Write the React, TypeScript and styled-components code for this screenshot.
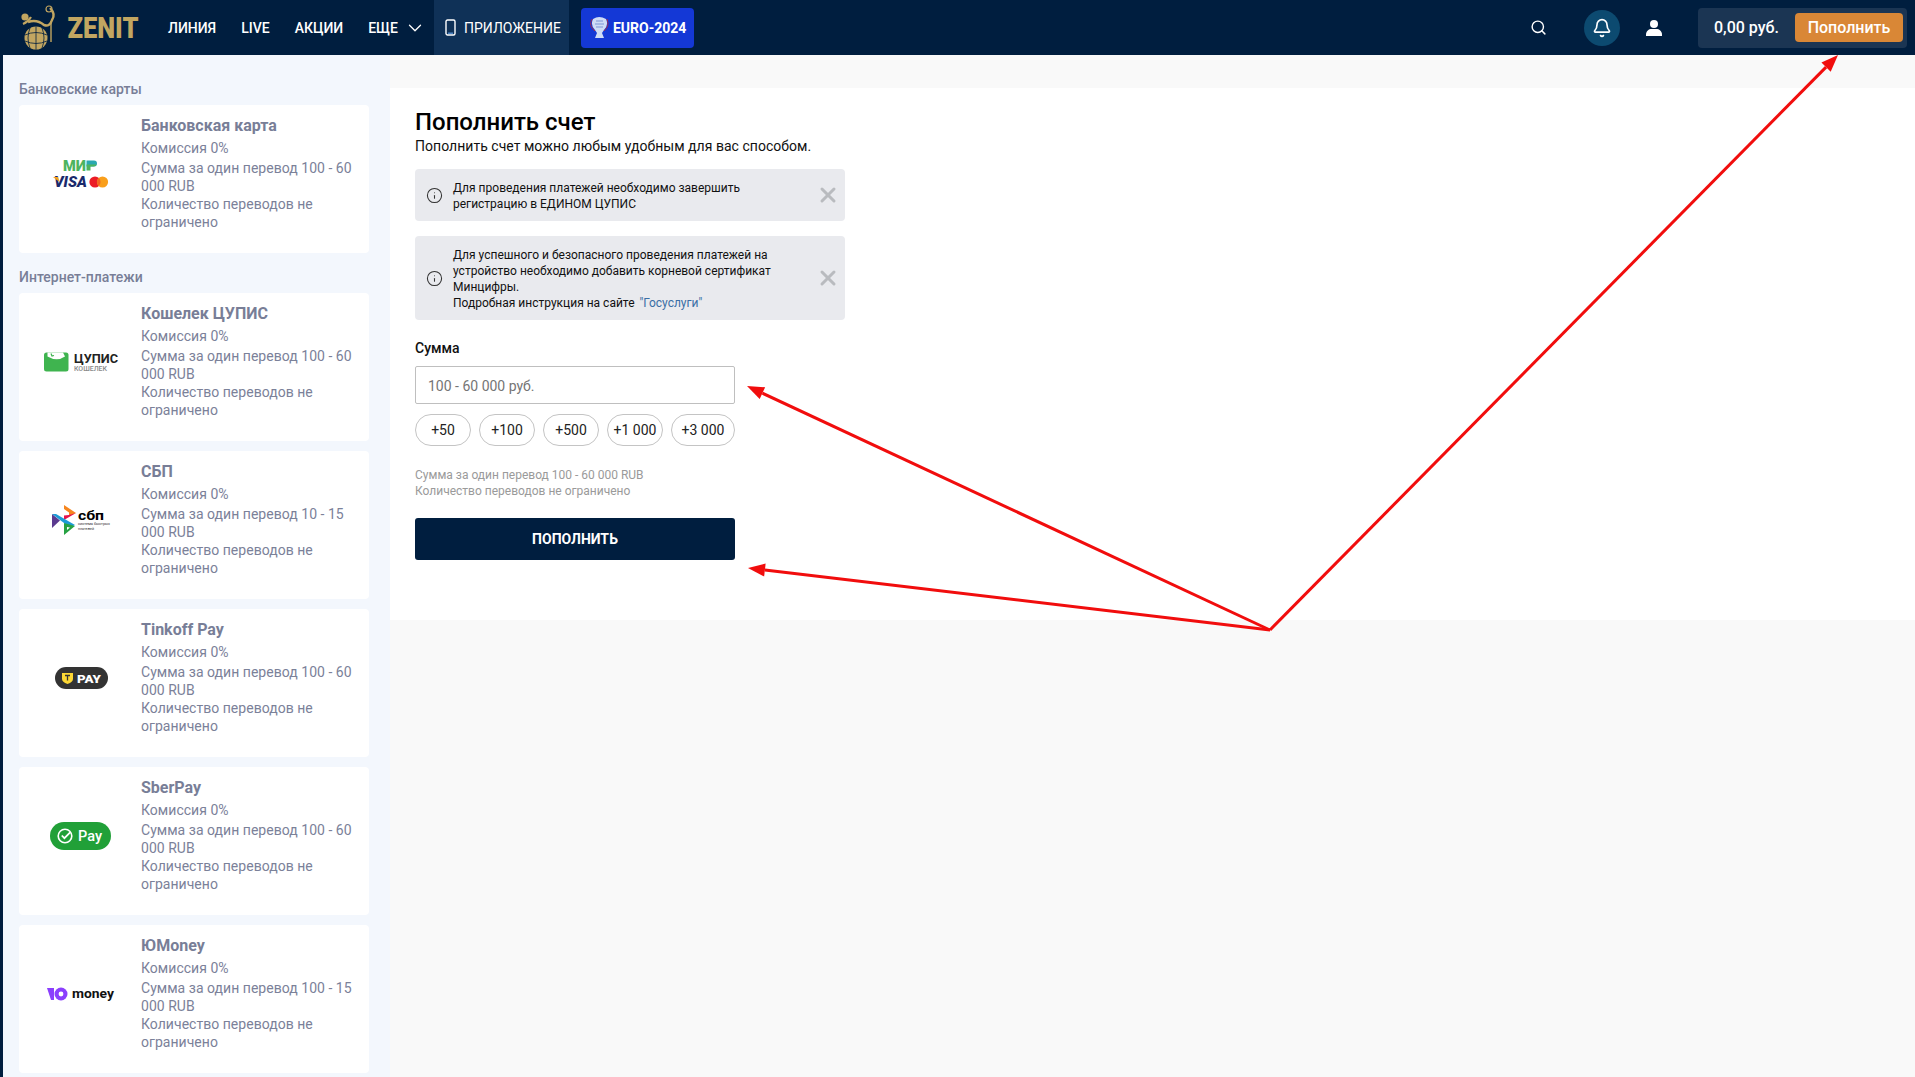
import React from "react";
import styled, { createGlobalStyle } from "styled-components";
import { Bell, ChevronDown, Info, Search, X } from "lucide-react";

const Global = createGlobalStyle`
  html, body { margin: 0; padding: 0; height: 100%; background: #f9f9f9; }
  body { font-family: Roboto, "Noto Sans", sans-serif; overflow: hidden; }
  * { box-sizing: border-box; }
`;

const Page = styled.div`
  position: relative;
  width: 1915px;
  height: 1077px;
  overflow: hidden;
  display: flex;
  flex-direction: column;
  border-left: 3px solid #001e3f;
`;

const Header = styled.header`
  height: 55px;
  flex: none;
  display: flex;
  align-items: center;
  background: #001e3f;
  padding-left: 17px;
`;

const LogoSvg = styled.svg`
  flex: none;
  display: block;
`;

const Nav = styled.nav`
  display: flex;
  align-items: center;
  height: 100%;
  margin-left: 28px;
`;

const NavLink = styled.a`
  display: flex;
  align-items: center;
  gap: 6px;
  margin-right: 25px;
  color: #fff;
  font-size: 14px;
  font-weight: 500;
  text-transform: uppercase;
  white-space: nowrap;
`;

const AppLink = styled.a`
  display: flex;
  align-items: center;
  gap: 8px;
  height: 100%;
  width: 135px;
  margin-left: -17px;
  padding-left: 11px;
  background: #0f3157;
  color: #fff;
  font-size: 14px;
  font-weight: 400;
  white-space: nowrap;
`;

const EuroButton = styled.a`
  display: flex;
  align-items: center;
  gap: 3px;
  height: 40px;
  width: 113px;
  margin-left: 12px;
  padding-left: 8px;
  border-radius: 4px;
  background: #1438d6;
  color: #fff;
  font-size: 14px;
  font-weight: 700;
  white-space: nowrap;
`;

const Tools = styled.div`
  display: flex;
  align-items: center;
  margin-left: auto;
  margin-right: 8px;
`;

const IconSlot = styled.span`
  display: flex;
  align-items: center;
  justify-content: center;
  color: #fff;
`;

const BellCircle = styled(IconSlot)`
  width: 36px;
  height: 36px;
  margin-left: 37px;
  border-radius: 50%;
  background: #0c4a70;
`;

const UserSlot = styled(IconSlot)`
  margin-left: 26px;
`;

const Balance = styled.div`
  display: flex;
  align-items: center;
  width: 209px;
  height: 40px;
  margin-left: 36px;
  padding: 0 4px 0 16px;
  border-radius: 4px;
  background: #1b3553;
`;

const Amount = styled.span`
  color: #fff;
  font-size: 16px;
  font-weight: 500;
  white-space: nowrap;
`;

const TopUp = styled.button`
  width: 108px;
  height: 29px;
  margin-left: auto;
  padding: 0;
  border: 0;
  border-radius: 4px;
  background: #d98736;
  color: #fff;
  font-family: inherit;
  font-size: 16px;
  font-weight: 500;
`;

const Body = styled.div`
  flex: 1;
  display: flex;
  min-height: 0;
`;

const Sidebar = styled.aside`
  width: 387px;
  flex: none;
  padding: 25px 21px 0 16px;
  background: #f3f7fd;
`;

const GroupTitle = styled.div`
  margin-bottom: 7px;
  color: #787e97;
  font-size: 14px;
  font-weight: 500;
  line-height: 18px;
`;

const Group = styled.section`
  margin-bottom: 15px;
`;

const Card = styled.div`
  display: flex;
  height: 148px;
  margin-bottom: 10px;
  border-radius: 4px;
  background: #fff;
  &:last-child { margin-bottom: 0; }
`;

const LogoCell = styled.div`
  flex: none;
  width: 122px;
  padding: 0 0 11px 2px;
  display: flex;
  align-items: center;
  justify-content: center;
`;

const CardBody = styled.div`
  flex: 1;
  padding: 11px 9px 0 0;
  color: #7b8199;
  font-size: 14px;
  line-height: 18px;
  letter-spacing: 0.03px;
`;

const CardTitle = styled.div`
  margin-bottom: 3px;
  color: #787e97;
  font-size: 16px;
  font-weight: 700;
  line-height: 20px;
  letter-spacing: 0;
`;

const CardLine = styled.div<{ $gap?: number }>`
  margin-bottom: ${(p) => p.$gap ?? 0}px;
`;

const Main = styled.main`
  flex: 1;
  background: #f9f9f9;
  padding-top: 33px;
`;

const Panel = styled.div`
  height: 532px;
  padding: 20px 0 0 25px;
  background: #fff;
`;

const Title = styled.h1`
  margin: 0;
  color: #000;
  font-size: 24px;
  font-weight: 500;
  line-height: 28px;
`;

const Subtitle = styled.p`
  margin: 1px 0 14px;
  color: #111;
  font-size: 14px;
  line-height: 18px;
  letter-spacing: 0.03px;
`;

const Alert = styled.div`
  display: flex;
  align-items: center;
  width: 430px;
  margin-bottom: 15px;
  padding: 11px 0 9px 11px;
  border-radius: 4px;
  background: #e9eaee;
  color: #111;
  font-size: 12px;
  line-height: 16px;
`;

const AlertText = styled.div`
  flex: 1;
  margin-left: 10px;
`;

const AlertLink = styled.a`
  margin-left: 2px;
  color: #3a6ea5;
`;

const AlertIcon = styled.span`
  flex: none;
  display: flex;
  margin-top: -2px;
  color: #333;
`;

const CloseIcon = styled.span`
  flex: none;
  display: flex;
  margin: -3px 5px 0 6px;
  color: #b9bbbf;
`;

const FieldLabel = styled.label`
  display: block;
  margin-top: 19px;
  color: #111;
  font-size: 14px;
  font-weight: 500;
  line-height: 18px;
`;

const AmountInput = styled.input`
  display: block;
  width: 320px;
  height: 38px;
  margin-top: 9px;
  padding: 2px 12px 0;
  border: 1px solid #bfbfbf;
  border-radius: 2px;
  background: #fff;
  font-family: inherit;
  font-size: 14px;
  &::placeholder { color: #757575; opacity: 1; }
`;

const Chips = styled.div`
  display: flex;
  gap: 8px;
  width: 320px;
  margin-top: 10px;
`;

const Chip = styled.button<{ $wide?: boolean }>`
  width: ${(p) => (p.$wide ? 64 : 56)}px;
  height: 32px;
  padding: 0;
  border: 1px solid #c4c4c4;
  border-radius: 16px;
  background: #fff;
  color: #222;
  font-family: inherit;
  font-size: 14px;
  white-space: nowrap;
`;

const Hint = styled.div`
  margin-top: 21px;
  color: #9a9a9a;
  font-size: 12px;
  line-height: 16px;
`;

const Submit = styled.button`
  display: block;
  width: 320px;
  height: 42px;
  margin-top: 19px;
  border: 0;
  border-radius: 3px;
  background: #001e3f;
  color: #fff;
  font-family: inherit;
  font-size: 14px;
  font-weight: 700;
  text-transform: uppercase;
`;

const Overlay = styled.svg`
  position: absolute;
  left: -3px;
  top: 0;
  pointer-events: none;
`;

const ZenitLogo = () => (
  <LogoSvg width="120" height="55" viewBox="0 0 120 55">
    <g fill="none" stroke="#c2a661">
      <circle cx="16" cy="38" r="11.5" fill="#c2a661" stroke="none" />
      <path d="M5 35 Q16 30 27 35 M5 41 Q16 46 27 41 M16 26.5 V49.5 M10 28 Q6 38 10 48 M22 28 Q26 38 22 48" stroke="#001e3f" strokeWidth="0.8" />
      <path d="M8 22 Q17 19 24 25 Q30 27 32 20 Q36 14 30 8" strokeWidth="2.4" />
      <path d="M3 24 Q8 22 11 17" strokeWidth="2.2" />
      <path d="M31 21 L31 42" strokeWidth="1.4" />
      <circle cx="29" cy="9" r="3" strokeWidth="1.2" />
    </g>
    <circle cx="5" cy="17" r="3.6" fill="#c2a661" />
    <text x="47.5" y="38" fontFamily="Roboto, sans-serif" fontWeight="900" fontSize="29" fill="#c2a661" textLength="71" lengthAdjust="spacingAndGlyphs">ZENIT</text>
  </LogoSvg>
);

const Phone = () => (
  <svg width="11" height="17" viewBox="0 0 11 17" fill="none">
    <rect x="1" y="1" width="9" height="15" rx="1.5" stroke="#fff" strokeWidth="1.4" />
    <path d="M3 14.2h5" stroke="#5d9be0" strokeWidth="1.2" />
  </svg>
);

const Trophy = () => (
  <svg width="21" height="24" viewBox="0 0 21 24">
    <path d="M4 3 Q10 -1 17 3 Q20 9 15 14 L13 17 L15 22 H6 L8 17 L6 14 Q1 9 4 3Z" fill="#cfdcf5" />
    <path d="M3 3 Q-1 10 6 15 M18 3 Q21 10 15 15" fill="none" stroke="#a12a4a" strokeWidth="1" />
    <path d="M7 5h7M6 8h9M7 11h7" stroke="#7f96d8" strokeWidth="1.2" />
  </svg>
);

const UserIcon = () => (
  <svg width="16" height="16" viewBox="0 0 16 16" fill="#fff">
    <circle cx="8" cy="4" r="4" />
    <path d="M0 16v-1.5C0 11 3 9 5.5 9h5c2.5 0 5.500 2 5.500 5.500V16z" />
  </svg>
);

const LogoFrame: React.FC<{ children: React.ReactNode }> = ({ children }) => (
  <svg width="100" height="60" viewBox="0 0 100 60">{children}</svg>
);

const font = "Roboto, sans-serif";

const MirVisa = () => (
  <LogoFrame>
    <text x="32" y="26.500" fontFamily={font} fontWeight="900" fontSize="14" fill="#4db45e" textLength="23" lengthAdjust="spacingAndGlyphs">МИ</text>
    <path d="M55.500 16.500h7.500q3 0 3 3 t-3 3h-7.500z" fill="#2aa8b0" />
    <path d="M55.500 20.500h10q-.5 2-3 2h-3v4h-4z" fill="#4db45e" />
    <text x="23" y="43" fontFamily={font} fontWeight="900" fontStyle="italic" fontSize="14.500" fill="#1a2a6c" textLength="33" lengthAdjust="spacingAndGlyphs">VISA</text>
    <path d="M22 33h5l1.500 5z" fill="#f4a11c" />
    <circle cx="64" cy="38" r="5.600" fill="#eb1c26" />
    <circle cx="71.500" cy="38" r="5.600" fill="#f99f1b" />
    <path d="M67.750 33.900a5.600 5.600 0 0 1 0 8.200a5.600 5.600 0 0 1 0-8.200z" fill="#f26522" />
  </LogoFrame>
);

const Cupis = () => (
  <LogoFrame>
    <rect x="13" y="20.500" width="24.500" height="19" rx="2.500" fill="#3fb44f" />
    <path d="M16.500 20.500h15.500l2 4q-8 5.500-17.500 0z" fill="#fff" />
    <path d="M20 21.500l1 2.500 2-.5" fill="none" stroke="#3fb44f" strokeWidth="1.200" />
    <text x="43" y="30.500" fontFamily={font} fontWeight="700" fontSize="12.500" fill="#222" textLength="44" lengthAdjust="spacingAndGlyphs">ЦУПИС</text>
    <text x="43" y="38.500" fontFamily={font} fontWeight="500" fontSize="6.500" fill="#8a8a8a" textLength="33" lengthAdjust="spacingAndGlyphs">КОШЕЛЕК</text>
  </LogoFrame>
);

const Sbp = () => (
  <LogoFrame>
    <path d="M33 15l12 8-7 3v-3.500l-5-3.500z" fill="#f6861f" />
    <path d="M45 23l-12 7v-4.500l5-.500z" fill="#e5124b" />
    <path d="M21 24l8 6.500-8 7.500z" fill="#5b3a8f" />
    <path d="M21 24h4l19 11-5 2.500z" fill="#1d9ad6" />
    <path d="M33 33l11 3-11 9z" fill="#27a243" />
    <path d="M36 37l3 .500-3 2.500z" fill="#fff" />
    <text x="47" y="29.500" fontFamily={font} fontWeight="700" fontSize="13" fill="#000" textLength="26" lengthAdjust="spacingAndGlyphs">сбп</text>
    <text x="47" y="35" fontFamily={font} fontSize="3.800" fill="#333" textLength="32" lengthAdjust="spacingAndGlyphs">система быстрых</text>
    <text x="47" y="39.500" fontFamily={font} fontSize="3.800" fill="#333" textLength="16" lengthAdjust="spacingAndGlyphs">платежей</text>
  </LogoFrame>
);

const TinkoffPay = () => (
  <LogoFrame>
    <rect x="24" y="19" width="53" height="22" rx="11" fill="#333" />
    <path d="M31 25h11v6q0 3-5.500 5q-5.500-2-5.500-5z" fill="#fdd835" />
    <path d="M34 27.500h5M36.500 27.500v5" stroke="#333" strokeWidth="1.300" />
    <text x="46" y="34.800" fontFamily={font} fontWeight="900" fontSize="11.500" fill="#fff" textLength="24" lengthAdjust="spacingAndGlyphs">PAY</text>
  </LogoFrame>
);

const SberPay = () => (
  <LogoFrame>
    <rect x="19" y="16" width="61" height="28" rx="14" fill="#21a038" />
    <circle cx="34" cy="30" r="6.800" fill="none" stroke="#fff" strokeWidth="1.600" />
    <path d="M30.800 29.500l2.600 2.700 6-6" fill="none" stroke="#fff" strokeWidth="1.800" />
    <text x="47" y="35" fontFamily={font} fontWeight="500" fontSize="14.500" fill="#fff" textLength="24" lengthAdjust="spacingAndGlyphs">Pay</text>
  </LogoFrame>
);

const YuMoney = () => (
  <LogoFrame>
    <path d="M16 24h7v12h-3z" fill="#8b3ffd" />
    <circle cx="30" cy="30" r="6.500" fill="#8b3ffd" />
    <circle cx="30" cy="30" r="2.400" fill="#fff" />
    <text x="41" y="34" fontFamily={font} fontWeight="700" fontSize="13" fill="#111" textLength="42" lengthAdjust="spacingAndGlyphs">money</text>
  </LogoFrame>
);

type Method = { title: string; sum: string; logo: React.ReactNode };

const MethodCard: React.FC<Method> = ({ title, sum, logo }) => (
  <Card>
    <LogoCell>{logo}</LogoCell>
    <CardBody>
      <CardTitle>{title}</CardTitle>
      <CardLine $gap={2}>Комиссия 0%</CardLine>
      <CardLine>Сумма за один перевод {sum} RUB</CardLine>
      <CardLine>Количество переводов не ограничено</CardLine>
    </CardBody>
  </Card>
);

const internet: Method[] = [
  { title: "Кошелек ЦУПИС", sum: "100 - 60 000", logo: <Cupis /> },
  { title: "СБП", sum: "10 - 15 000", logo: <Sbp /> },
  { title: "Tinkoff Pay", sum: "100 - 60 000", logo: <TinkoffPay /> },
  { title: "SberPay", sum: "100 - 60 000", logo: <SberPay /> },
  { title: "ЮMoney", sum: "100 - 15 000", logo: <YuMoney /> },
];

const chips = ["+50", "+100", "+500", "+1 000", "+3 000"];

const Arrow: React.FC<{ x1: number; y1: number; x2: number; y2: number }> = ({ x1, y1, x2, y2 }) => {
  const a = Math.atan2(y2 - y1, x2 - x1);
  const len = 17;
  const w = 6.5;
  const bx = x2 - len * Math.cos(a);
  const by = y2 - len * Math.sin(a);
  const px = -Math.sin(a) * w;
  const py = Math.cos(a) * w;
  return (
    <g>
      <line x1={x1} y1={y1} x2={bx} y2={by} stroke="#f10d0d" strokeWidth="3" />
      <polygon points={`${x2},${y2} ${bx + px},${by + py} ${bx - px},${by - py}`} fill="#f10d0d" />
    </g>
  );
};

export default function App() {
  return (
    <>
      <Global />
      <Page>
        <Header>
          <ZenitLogo />
          <Nav>
            <NavLink>Линия</NavLink>
            <NavLink>Live</NavLink>
            <NavLink>Акции</NavLink>
            <NavLink>
              Еще
              <ChevronDown size={22} strokeWidth={1.4} />
            </NavLink>
            <AppLink>
              <Phone />
              ПРИЛОЖЕНИЕ
            </AppLink>
            <EuroButton>
              <Trophy />
              EURO-2024
            </EuroButton>
          </Nav>
          <Tools>
            <IconSlot>
              <Search size={17} strokeWidth={2} />
            </IconSlot>
            <BellCircle>
              <Bell size={20} strokeWidth={2} />
            </BellCircle>
            <UserSlot>
              <UserIcon />
            </UserSlot>
            <Balance>
              <Amount>0,00 руб.</Amount>
              <TopUp>Пополнить</TopUp>
            </Balance>
          </Tools>
        </Header>
        <Body>
          <Sidebar>
            <Group>
              <GroupTitle>Банковские карты</GroupTitle>
              <MethodCard title="Банковская карта" sum="100 - 60 000" logo={<MirVisa />} />
            </Group>
            <Group>
              <GroupTitle>Интернет-платежи</GroupTitle>
              {internet.map((m) => (
                <MethodCard key={m.title} {...m} />
              ))}
            </Group>
          </Sidebar>
          <Main>
            <Panel>
              <Title>Пополнить счет</Title>
              <Subtitle>Пополнить счет можно любым удобным для вас способом.</Subtitle>
              <Alert>
                <AlertIcon><Info size={17} strokeWidth={1.5} /></AlertIcon>
                <AlertText>
                  Для проведения платежей необходимо завершить
                  <br />
                  регистрацию в ЕДИНОМ ЦУПИС
                </AlertText>
                <CloseIcon><X size={24} strokeWidth={3} /></CloseIcon>
              </Alert>
              <Alert>
                <AlertIcon><Info size={17} strokeWidth={1.5} /></AlertIcon>
                <AlertText>
                  Для успешного и безопасного проведения платежей на
                  <br />
                  устройство необходимо добавить корневой сертификат
                  <br />
                  Минцифры.
                  <br />
                  Подробная инструкция на сайте <AlertLink>"Госуслуги"</AlertLink>
                </AlertText>
                <CloseIcon><X size={24} strokeWidth={3} /></CloseIcon>
              </Alert>
              <FieldLabel>Сумма</FieldLabel>
              <AmountInput placeholder="100 - 60 000 руб." readOnly />
              <Chips>
                {chips.map((c, i) => (
                  <Chip key={c} $wide={i === 4}>{c}</Chip>
                ))}
              </Chips>
              <Hint>
                Сумма за один перевод 100 - 60 000 RUB
                <br />
                Количество переводов не ограничено
              </Hint>
              <Submit>Пополнить</Submit>
            </Panel>
          </Main>
        </Body>
        <Overlay width="1915" height="1077" viewBox="0 0 1915 1077">
          <Arrow x1={1270} y1={630} x2={1838} y2={55} />
          <Arrow x1={1270} y1={630} x2={747} y2={386} />
          <Arrow x1={1270} y1={630} x2={748} y2={568} />
        </Overlay>
      </Page>
    </>
  );
}
